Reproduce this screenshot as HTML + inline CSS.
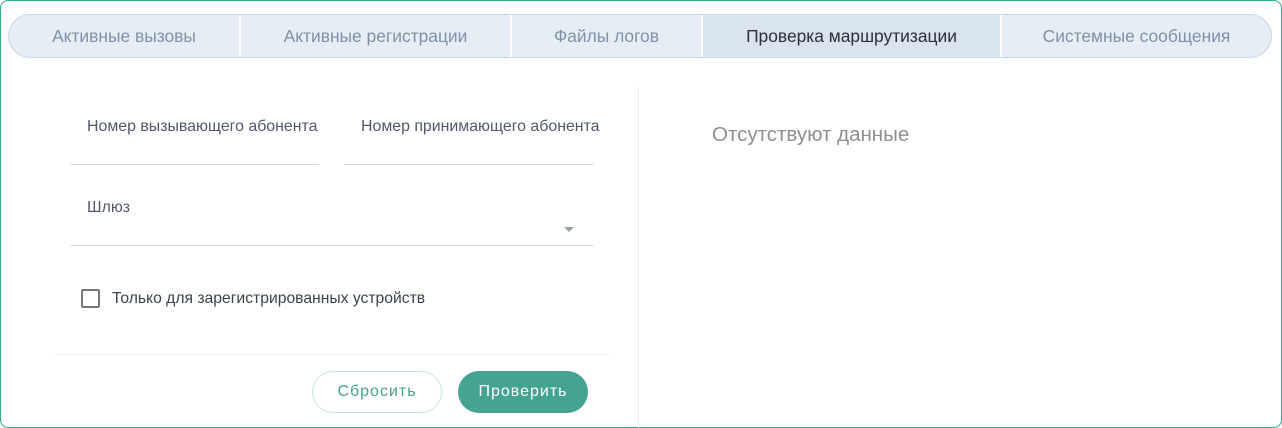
<!DOCTYPE html>
<html><head><meta charset="utf-8"><style>
body{margin:0;width:1282px;height:428px;background:#fff;font-family:"Liberation Sans",sans-serif;overflow:hidden;position:relative}
.frame{position:absolute;left:0;top:0;width:1280px;height:426px;border:1px solid #2aab8a;border-radius:8px}
.tabs{position:absolute;left:8px;top:14px;width:1262px;height:42px;border:1px solid #c9d8ea;border-radius:22px;background:#e6edf5;display:flex;overflow:hidden}
.tab{height:42px;line-height:42px;text-align:center;font-size:17.4px;color:#7e91a8;border-right:2px solid #fff;box-sizing:border-box}
.tab.act{background:#dae4ef;color:#2b2f36}
.lbl{position:absolute;font-size:15.9px;color:#50596a}
.line{position:absolute;height:1px;background:#d8dce2}
.btn{position:absolute;height:40px;border-radius:21px;font-size:16px;line-height:40px;text-align:center;letter-spacing:1px}
</style></head><body>
<div class="frame"></div>
<div class="tabs">
<div class="tab" style="width:232px">Активные вызовы</div>
<div class="tab" style="width:271px">Активные регистрации</div>
<div class="tab" style="width:191px">Файлы логов</div>
<div class="tab act" style="width:299px">Проверка маршрутизации</div>
<div class="tab" style="width:269px;border:none">Системные сообщения</div>
</div>
<div class="lbl" style="left:87px;top:118px">Номер вызывающего абонента</div>
<div class="line" style="left:70px;top:164px;width:249px"></div>
<div class="lbl" style="left:361px;top:118px">Номер принимающего абонента</div>
<div class="line" style="left:344px;top:164px;width:250px"></div>
<div class="lbl" style="left:87px;top:199px">Шлюз</div>
<div style="position:absolute;left:564px;top:227px;width:0;height:0;border-left:5px solid transparent;border-right:5px solid transparent;border-top:5px solid #9aa3ad"></div>
<div class="line" style="left:70px;top:245px;width:524px"></div>
<div style="position:absolute;left:81px;top:289px;width:15px;height:15px;border:2px solid #777;border-radius:2px"></div>
<div class="lbl" style="left:112px;top:290px;color:#3b4350;font-size:15.7px">Только для зарегистрированных устройств</div>
<div class="line" style="left:54px;top:354px;width:555px;background:#eef0f2"></div>
<div style="position:absolute;left:638px;top:86px;width:1px;height:342px;background:#eceef0"></div>
<div class="btn" style="left:312px;top:371px;width:128px;border:1px solid #cde3dc;color:#45a08e">Сбросить</div>
<div class="btn" style="left:458px;top:371px;width:130px;height:42px;line-height:42px;background:#45a392;color:#fff">Проверить</div>
<div style="position:absolute;left:712px;top:123px;font-size:20.5px;color:#8b9096">Отсутствуют данные</div>
</body></html>
